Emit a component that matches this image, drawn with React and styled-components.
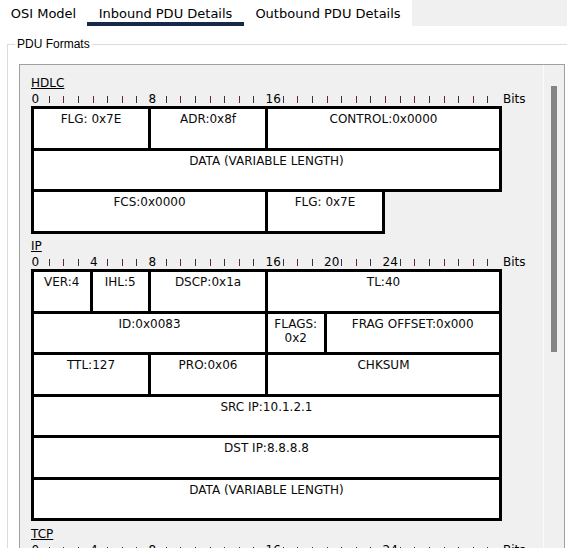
import React from 'react';
import styled, { createGlobalStyle } from 'styled-components';

const BIT = 14.625;

const Global = createGlobalStyle`
  html, body { margin: 0; padding: 0; background: #fff; overflow: hidden; }
  #root { height: 548px; overflow: hidden; }
`;

const Page = styled.div`
  width: 567px;
  height: 548px;
  overflow: hidden;
  background: #fff;
  font-family: "DejaVu Sans", Verdana, sans-serif;
  font-size: 12px;
  color: #000;
`;

const TabBar = styled.div`
  display: flex;
  height: 26px;
  background: #f0f0f0;
`;

const Tab = styled.div`
  box-sizing: border-box;
  flex: none;
  width: ${p => p.$w}px;
  height: 26px;
  background: #fff;
  font-family: "DejaVu Sans", Verdana, sans-serif;
  font-size: 13px;
  line-height: 27px;
  text-align: center;
  white-space: nowrap;
  color: #000;
  box-shadow: ${p => (p.$active ? 'inset 0 -4px 0 #17294a' : 'none')};
`;

const Group = styled.fieldset`
  box-sizing: border-box;
  width: 620px;
  min-width: 0;
  margin: 11px 0 0 7px;
  padding: 13px 0 0 11px;
  border: 1px solid #dcdcdc;
`;

const Legend = styled.legend`
  margin-left: -4px;
  padding: 0 2px;
  font-family: "Liberation Sans", Arial, sans-serif;
  font-size: 12px;
  line-height: 14px;
`;

const Panel = styled.div`
  box-sizing: border-box;
  display: flex;
  width: 546px;
  height: 620px;
  border: 1px solid #a0a0a0;
  background: #f0f0f0;
`;

const Content = styled.div`
  flex: 1;
  padding: 11px 0 0 11px;
`;

const Scrollbar = styled.div`
  flex: none;
  width: 20px;
  border-left: 1px solid #fbfbfb;
`;

const Thumb = styled.div`
  width: 6px;
  height: 266px;
  margin: 21px 0 0 7px;
  background: #858585;
`;

const Section = styled.section`
  margin-bottom: 5.5px;
`;

const Title = styled.div`
  height: 14px;
  line-height: 14px;
  margin-bottom: 2px;
  text-decoration: underline;
`;

const Ruler = styled.div`
  display: flex;
  align-items: flex-end;
  height: 14px;
`;

const Slot = styled.div`
  flex: none;
  width: ${BIT}px;
  height: 14px;
  display: flex;
  align-items: flex-end;
`;

const RulerNum = styled.span`
  line-height: 14px;
  margin-left: 0.5px;
  white-space: nowrap;
`;

const Tick = styled.span`
  flex: none;
  width: 1px;
  height: 7px;
  margin: 0 0 3px 3px;
  background: ${p => (p.$alt ? '#6a2440' : '#3a3048')};
`;

const BitsLabel = styled.span`
  line-height: 14px;
  margin-left: 4px;
`;

const Table = styled.div`
  display: flex;
  flex-direction: column;
  align-items: flex-start;
`;

const Row = styled.div`
  display: flex;
  margin-bottom: -3px;
  &:last-child { margin-bottom: 0; }
`;

const Cell = styled.div`
  box-sizing: border-box;
  flex: none;
  width: calc(${p => p.$bits} * ${BIT}px + 3px);
  height: 44.5px;
  margin-right: -3px;
  padding-top: 3px;
  border: 3px solid #000;
  background: #fff;
  text-align: center;
  line-height: 14px;
  white-space: pre-line;
  color: #0a0a0a;
`;

const formats = [
  {
    name: 'HDLC',
    marks: [0, 8, 16],
    rows: [
      [['FLG: 0x7E', 8], ['ADR:0x8f', 8], ['CONTROL:0x0000', 16]],
      [['DATA (VARIABLE LENGTH)', 32]],
      [['FCS:0x0000', 16], ['FLG: 0x7E', 8]],
    ],
  },
  {
    name: 'IP',
    marks: [0, 4, 8, 16, 20, 24],
    rows: [
      [['VER:4', 4], ['IHL:5', 4], ['DSCP:0x1a', 8], ['TL:40', 16]],
      [['ID:0x0083', 16], ['FLAGS:\n0x2', 4], ['FRAG OFFSET:0x000', 12]],
      [['TTL:127', 8], ['PRO:0x06', 8], ['CHKSUM', 16]],
      [['SRC IP:10.1.2.1', 32]],
      [['DST IP:8.8.8.8', 32]],
      [['DATA (VARIABLE LENGTH)', 32]],
    ],
  },
  {
    name: 'TCP',
    marks: [0, 4, 8, 16, 24],
    rows: [],
  },
];

function BitRuler({ marks }) {
  return (
    <Ruler>
      {Array.from({ length: 32 }, (_, i) => (
        <Slot key={i}>
          {marks.includes(i) ? <RulerNum>{i}</RulerNum> : <Tick $alt={i % 2 === 0} />}
        </Slot>
      ))}
      <BitsLabel>Bits</BitsLabel>
    </Ruler>
  );
}

export default function App() {
  return (
    <Page>
      <Global />
      <TabBar>
        <Tab $w={87}>OSI Model</Tab>
        <Tab $w={157} $active>Inbound PDU Details</Tab>
        <Tab $w={168}>Outbound PDU Details</Tab>
      </TabBar>
      <Group>
        <Legend>PDU Formats</Legend>
        <Panel>
          <Content>
            {formats.map(f => (
              <Section key={f.name}>
                <Title>{f.name}</Title>
                <BitRuler marks={f.marks} />
                {f.rows.length > 0 && (
                  <Table>
                    {f.rows.map((r, ri) => (
                      <Row key={ri}>
                        {r.map(([t, b], ci) => (
                          <Cell key={ci} $bits={b}>{t}</Cell>
                        ))}
                      </Row>
                    ))}
                  </Table>
                )}
              </Section>
            ))}
          </Content>
          <Scrollbar>
            <Thumb />
          </Scrollbar>
        </Panel>
      </Group>
    </Page>
  );
}
